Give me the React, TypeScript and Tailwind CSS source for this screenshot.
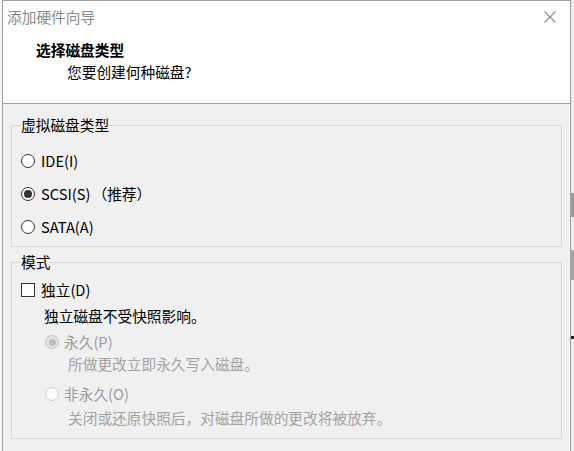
import React from "react";

const font = { fontFamily: '"Noto Sans CJK SC", "Noto Sans", sans-serif' };

function Radio({ checked, disabled }: { checked?: boolean; disabled?: boolean }) {
  if (disabled) {
    return (
      <span
        className={
          "flex w-[14px] h-[14px] shrink-0 items-center justify-center rounded-full border " +
          (checked ? "border-[#c6c6c6] bg-[#e3e3e3]" : "border-[#d0d0d0] bg-[#fbfbfb]")
        }
      >
        {checked && <span className="w-[7px] h-[7px] rounded-full bg-[#bdbdbd]" />}
      </span>
    );
  }
  return (
    <span className="flex w-[14px] h-[14px] shrink-0 items-center justify-center rounded-full border border-[#333333] bg-white">
      {checked && <span className="w-[8px] h-[8px] rounded-full bg-[#333333]" />}
    </span>
  );
}

export default function App() {
  return (
    <div className="flex w-[574px] h-[451px] overflow-hidden bg-[#f0f0f0] text-[14.7px] text-black" style={font}>
      <div className="w-[2px] h-full bg-[#f7f7f7]" />
      <div className="flex flex-col w-[569px] h-full border-l border-r border-t border-[#9f9f9f]">
        <div className="flex flex-col bg-white border-b border-[#a0a0a0]">
          <div className="flex h-[31px] items-center justify-between pl-[4px] pr-[14px]">
            <span className="text-[14.7px] leading-[20px] text-[#8a8a8a]">添加硬件向导</span>
            <svg width="12" height="12" viewBox="0 0 12 12" className="shrink-0">
              <path d="M0.5 0.5 L11.5 11.5 M11.5 0.5 L0.5 11.5" stroke="#8a8a8a" strokeWidth="1.1" fill="none" />
            </svg>
          </div>
          <div className="flex flex-col h-[71px] pt-[8px]">
            <div className="pl-[33px] h-[20px] leading-[20px] font-bold">选择磁盘类型</div>
            <div className="pl-[64px] mt-[2px] h-[20px] leading-[20px]">您要创建何种磁盘?</div>
          </div>
        </div>
        <div className="flex flex-col flex-1 px-[8px] pt-[11px]">
          <fieldset className="border border-[#d8d8d8] pt-[9px] pb-[3px] pl-[9px]">
            <legend className="h-[20px] leading-[20px] px-0">虚拟磁盘类型</legend>
            <div className="flex h-[33px] items-center">
              <Radio />
              <span className="ml-[6px] leading-[20px]">IDE(I)</span>
            </div>
            <div className="flex h-[33px] items-center">
              <Radio checked />
              <span className="ml-[6px] leading-[20px]">SCSI(S)</span>
              <span className="ml-[2px] leading-[20px]">（推荐）</span>
            </div>
            <div className="flex h-[33px] items-center">
              <Radio />
              <span className="ml-[6px] leading-[20px]">SATA(A)</span>
            </div>
          </fieldset>
          <fieldset className="mt-[5px] border border-[#d8d8d8] pt-[6px] pb-[10px] pl-[9px]">
            <legend className="h-[20px] leading-[20px] px-0">模式</legend>
            <div className="flex h-[24px] items-center">
              <span className="w-[14px] h-[14px] shrink-0 border border-[#333333] bg-white" />
              <span className="ml-[6px] leading-[20px]">独立(D)</span>
            </div>
            <div className="flex h-[24px] mt-[2px] items-center pl-[23px]">独立磁盘不受快照影响。</div>
            <div className="flex h-[24px] mt-[2px] items-center pl-[24px]">
              <Radio checked disabled />
              <span className="ml-[5px] leading-[20px] text-[#9a9a9a]">永久(P)</span>
            </div>
            <div className="flex h-[20px] items-center pl-[47px] text-[#a3a3a3]">所做更改立即永久写入磁盘。</div>
            <div className="flex h-[24px] mt-[8px] items-center pl-[24px]">
              <Radio disabled />
              <span className="ml-[5px] leading-[20px] text-[#9a9a9a]">非永久(O)</span>
            </div>
            <div className="flex h-[20px] mt-[2px] items-center pl-[47px] text-[#a3a3a3]">
              关闭或还原快照后，对磁盘所做的更改将被放弃。
            </div>
          </fieldset>
        </div>
      </div>
      <div className="flex flex-col w-[3px] h-full bg-[#ececec]">
        <div className="h-[193px]" />
        <div className="h-[24px] bg-[#9a9a9a]" />
        <div className="h-[33px]" />
        <div className="h-[30px] bg-[#a5a5a5]" />
        <div className="h-[56px]" />
        <div className="h-[3px] bg-[#222222]" />
      </div>
    </div>
  );
}
